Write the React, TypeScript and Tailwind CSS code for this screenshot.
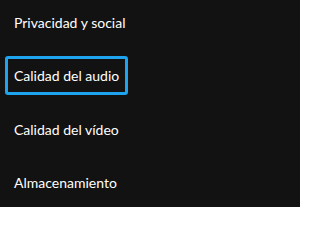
const items = [
  "Privacidad y social",
  "Calidad del audio",
  "Calidad del vídeo",
  "Almacenamiento",
];

export default function App() {
  const focused = 1;
  return (
    <div className="h-[207px] w-[300px] overflow-hidden bg-[#121212] font-['Lato','Noto_Sans',sans-serif]">
      <ul className="flex flex-col gap-[14.3px] pl-[5px] pt-[3px]">
        {items.map((label, i) => (
          <li key={label} className="flex">
            <button
              className={
                i === focused
                  ? "flex h-[39px] items-center rounded-[3px] border-[3px] border-[#1ea4ee] px-[6px] text-[14px] text-white"
                  : "flex h-[39px] items-center rounded-[3px] border-[3px] border-transparent px-[6px] text-[14px] text-white"
              }
            >
              {label}
            </button>
          </li>
        ))}
      </ul>
    </div>
  );
}
